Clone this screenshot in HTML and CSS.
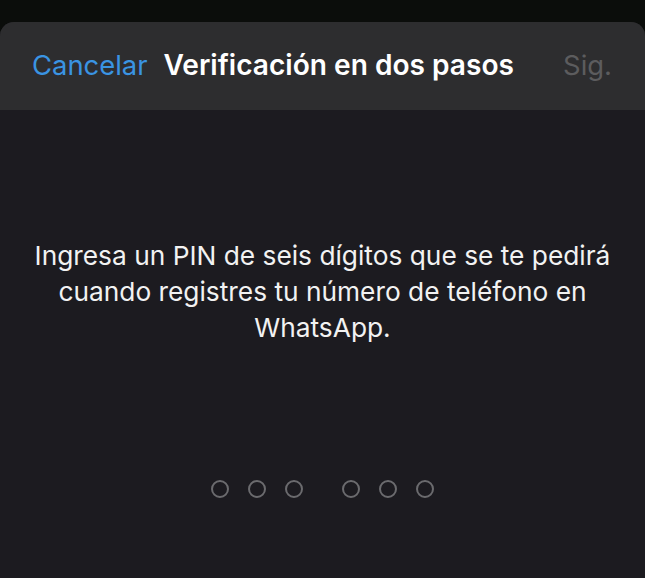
FILE: index.html
```html
<!DOCTYPE html>
<html lang="es">
<head>
<meta charset="utf-8">
<link rel="stylesheet" href="styles.css">
</head>
<body>
<div class="sheet">
  <header class="nav">
    <span class="cancel">Cancelar</span>
    <span class="title">Verificación en dos pasos</span>
    <span class="next">Sig.</span>
  </header>
  <main class="content">
    <p class="desc">Ingresa un PIN de seis dígitos que se te pedirá cuando registres tu número de teléfono en WhatsApp.</p>
    <div class="pin">
      <div class="group">
        <span class="dot"></span><span class="dot"></span><span class="dot"></span>
      </div>
      <div class="group">
        <span class="dot"></span><span class="dot"></span><span class="dot"></span>
      </div>
    </div>
  </main>
</div>
</body>
</html>
```
FILE: styles.css
```css
html, body {
  margin: 0;
  padding: 0;
  height: 100%;
  background: #0b0d0b;
  overflow: hidden;
}
body {
  padding-top: 22px;
  box-sizing: border-box;
  font-family: Inter, "Liberation Sans", sans-serif;
}
.sheet {
  height: 100%;
  background: #1c1b20;
  border-radius: 14px 14px 0 0;
  overflow: hidden;
  display: flex;
  flex-direction: column;
}
.nav {
  height: 88px;
  background: #2d2d2f;
  display: flex;
  align-items: center;
  padding: 0 33px 2px 32px;
  box-sizing: border-box;
  font-size: 27.4px;
  flex-shrink: 0;
}
.cancel {
  color: #3a94e3;
}
.title {
  color: #ffffff;
  font-weight: 600;
  font-size: 28.1px;
  margin-left: 16px;
}
.next {
  color: #5c5c5e;
  margin-left: auto;
}
.content {
  display: flex;
  flex-direction: column;
  align-items: center;
}
.desc {
  margin: 128px 0 0;
  padding: 0 20px;
  color: #f2f2f2;
  font-size: 26.3px;
  line-height: 36px;
  text-align: center;
}
.pin {
  margin-top: 134px;
  display: flex;
  gap: 39px;
}
.group {
  display: flex;
  gap: 19px;
}
.dot {
  width: 14px;
  height: 14px;
  border: 2px solid #6b6b6e;
  border-radius: 50%;
}
```
